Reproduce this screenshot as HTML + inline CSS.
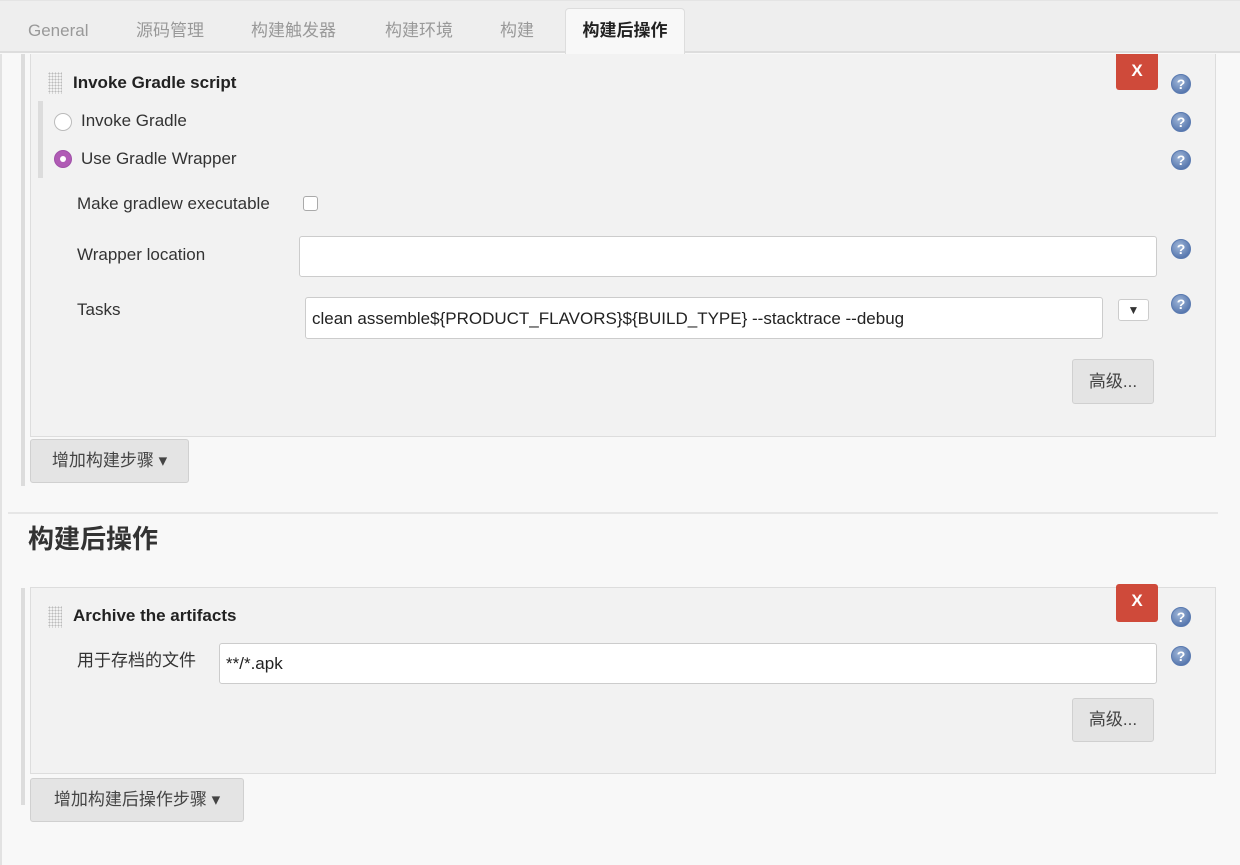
<!DOCTYPE html>
<html><head><meta charset="utf-8"><style>
*{box-sizing:border-box}
body{margin:0;width:1240px;height:865px;background:#f8f8f8;font-family:"Liberation Sans","Noto Sans CJK SC",sans-serif;color:#333;position:relative;overflow:hidden;line-height:20px}
.abs{position:absolute}
.tabs{left:0;top:0;width:1240px;height:53px;background:#eeeeee;border-bottom:2px solid #ddd;border-top:1px solid #e4e4e4}
.tab{position:absolute;top:20px;font-size:17px;color:#999;line-height:20px}
.active{left:565px;top:8px;width:120px;height:47px;background:#f8f8f8;border:1px solid #ddd;border-bottom:none;border-radius:4px 4px 0 0;font-weight:bold;color:#222;font-size:17px;text-align:center;padding-top:12px;line-height:20px}
.panel{background:#f2f2f2;border:1px solid #ddd}
.bar{background:#dcdcdc}
.help{width:20px;height:20px;border-radius:50%;background:radial-gradient(circle at 40% 35%,#9fb6d8,#3f62a0);border:1px solid #5a7ab0;color:#fff;font-size:14px;font-weight:bold;text-align:center;line-height:18px}
.x{width:42px;height:36px;background:#cf4a3a;color:#fff;font-weight:bold;font-size:17px;text-align:center;line-height:34px;border-radius:0 0 3px 3px}
.lbl{font-size:17px;color:#333}
.inp{background:#fff;border:1px solid #ccc;border-radius:3px;font-size:17px;padding-left:6px;color:#222}
.btn{background:#e4e4e4;border:1px solid #d0d0d0;border-radius:3px;font-size:17px;color:#444;text-align:center}
.grip{width:14px;height:22px;background-image:radial-gradient(#bbb 0.8px,transparent 1px);background-size:3px 3px}
.radio{width:18px;height:18px;border-radius:50%;border:1px solid #bbb;background:#fff}
</style></head><body>
<div class="abs tabs">
<div class="tab" style="left:28px">General</div>
<div class="tab" style="left:136px">源码管理</div>
<div class="tab" style="left:251px">构建触发器</div>
<div class="tab" style="left:385px">构建环境</div>
<div class="tab" style="left:500px">构建</div>
</div>
<div class="abs active">构建后操作</div>

<div class="abs" style="left:0;top:54px;width:2px;height:811px;background:#e2e2e2"></div>
<div class="abs bar" style="left:21px;top:54px;width:4px;height:432px"></div>
<div class="abs panel" style="left:30px;top:54px;width:1186px;height:383px;border-top:none"></div>
<div class="abs grip" style="left:48px;top:72px"></div>
<div class="abs" style="left:73px;top:73px;font-size:17px;font-weight:bold;color:#222">Invoke Gradle script</div>
<div class="abs x" style="left:1116px;top:54px">X</div>
<div class="abs help" style="left:1171px;top:74px">?</div>
<div class="abs bar" style="left:38px;top:101px;width:5px;height:77px"></div>
<div class="abs radio" style="left:54px;top:113px"></div>
<div class="abs lbl" style="left:81px;top:111px">Invoke Gradle</div>
<div class="abs help" style="left:1171px;top:112px">?</div>
<div class="abs radio" style="left:54px;top:150px;background:#b05bb5;border-color:#a050a8"><div style="width:6px;height:6px;background:#fff;border-radius:50%;margin:5px"></div></div>
<div class="abs lbl" style="left:81px;top:149px">Use Gradle Wrapper</div>
<div class="abs help" style="left:1171px;top:150px">?</div>
<div class="abs lbl" style="left:77px;top:194px">Make gradlew executable</div>
<div class="abs" style="left:303px;top:196px;width:15px;height:15px;border:1px solid #aaa;border-radius:3px;background:#fff"></div>
<div class="abs lbl" style="left:77px;top:245px">Wrapper location</div>
<div class="abs inp" style="left:299px;top:236px;width:858px;height:41px"></div>
<div class="abs help" style="left:1171px;top:239px">?</div>
<div class="abs lbl" style="left:77px;top:300px">Tasks</div>
<div class="abs inp" style="left:305px;top:297px;width:798px;height:42px;line-height:42px">clean assemble${PRODUCT_FLAVORS}${BUILD_TYPE} --stacktrace --debug</div>
<div class="abs" style="left:1118px;top:299px;width:31px;height:22px;background:#fff;border:1px solid #ccc;border-radius:3px;font-size:12px;text-align:center;line-height:20px">▼</div>
<div class="abs help" style="left:1171px;top:294px">?</div>
<div class="abs btn" style="left:1072px;top:359px;width:82px;height:45px;line-height:43px">高级...</div>
<div class="abs btn" style="left:30px;top:439px;width:159px;height:44px;line-height:42px">增加构建步骤 ▾</div>

<div class="abs" style="left:8px;top:512px;width:1210px;height:2px;background:#e6e6e6"></div>
<div class="abs" style="left:28px;top:525px;font-size:26px;font-weight:bold;color:#333;line-height:28px">构建后操作</div>

<div class="abs bar" style="left:21px;top:588px;width:4px;height:217px"></div>
<div class="abs panel" style="left:30px;top:587px;width:1186px;height:187px"></div>
<div class="abs grip" style="left:48px;top:606px"></div>
<div class="abs" style="left:73px;top:606px;font-size:17px;font-weight:bold;color:#222">Archive the artifacts</div>
<div class="abs x" style="left:1116px;top:584px;border-radius:3px;height:38px">X</div>
<div class="abs help" style="left:1171px;top:607px">?</div>
<div class="abs lbl" style="left:77px;top:651px">用于存档的文件</div>
<div class="abs inp" style="left:219px;top:643px;width:938px;height:41px;line-height:39px">**/*.apk</div>
<div class="abs help" style="left:1171px;top:646px">?</div>
<div class="abs btn" style="left:1072px;top:698px;width:82px;height:44px;line-height:42px">高级...</div>
<div class="abs btn" style="left:30px;top:778px;width:214px;height:44px;line-height:42px">增加构建后操作步骤 ▾</div>
</body></html>
